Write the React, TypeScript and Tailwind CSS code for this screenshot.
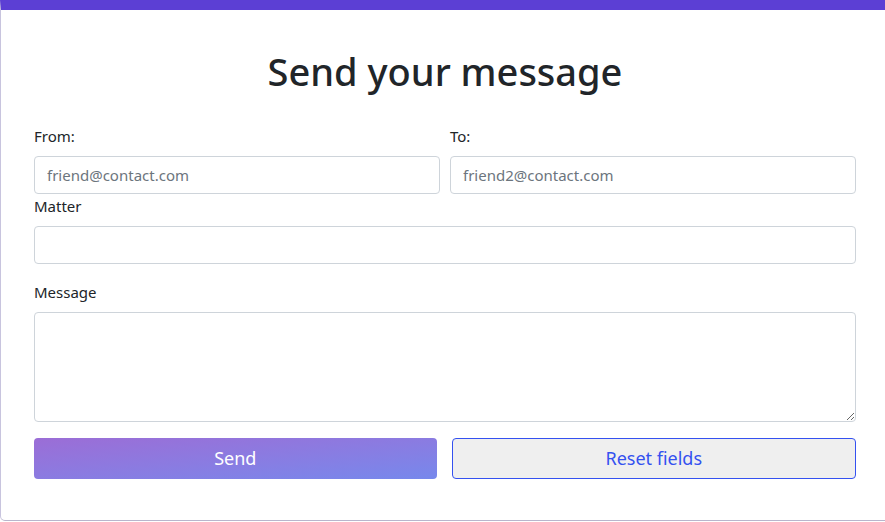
export default function App() {
  return (
    <div className="min-h-[522px] bg-white font-['Noto_Sans',sans-serif] text-[#212529]">
      <div className="border-t-[10px] border-l border-b border-t-[#5c3fd4] border-l-[#c8c4de] border-b-[#b9b5cc] rounded-bl-[5px] bg-white pl-[33px] pr-[29px] pb-[41px]">
        <h1 className="pt-[37px] pb-[31px] text-center text-[38px] leading-[48px] font-medium">
          Send your message
        </h1>
        <form className="flex flex-col">
          <div className="grid grid-cols-2 gap-[10px]">
            <div className="flex flex-col">
              <label className="text-[15px] leading-[20px] mb-[10px]">From:</label>
              <input
                placeholder="friend@contact.com"
                className="h-[38px] rounded-[4px] border border-[#ced4da] px-[12px] text-[15px] placeholder:text-[#6c757d] outline-none"
              />
            </div>
            <div className="flex flex-col">
              <label className="text-[15px] leading-[20px] mb-[10px]">To:</label>
              <input
                placeholder="friend2@contact.com"
                className="h-[38px] rounded-[4px] border border-[#ced4da] px-[12px] text-[15px] placeholder:text-[#6c757d] outline-none"
              />
            </div>
          </div>
          <label className="text-[15px] leading-[24px] mb-[8px]">Matter</label>
          <input className="h-[38px] rounded-[4px] border border-[#ced4da] px-[12px] text-[15px] outline-none" />
          <label className="mt-[16px] text-[15px] leading-[24px] mb-[8px]">Message</label>
          <textarea className="h-[110px] rounded-[4px] border border-[#ced4da] px-[12px] py-[6px] text-[15px] outline-none" />
          <div className="mt-[16px] flex gap-[15px]">
            <button
              type="button"
              className="h-[41px] flex-1 rounded-[4px] bg-gradient-to-br from-[#9b6dd6] to-[#7688ec] text-[18px] text-white"
            >
              Send
            </button>
            <button
              type="button"
              className="h-[41px] flex-1 rounded-[4px] border border-[#3451f0] bg-[#efefef] text-[18px] text-[#3451f0]"
            >
              Reset fields
            </button>
          </div>
        </form>
      </div>
    </div>
  );
}
